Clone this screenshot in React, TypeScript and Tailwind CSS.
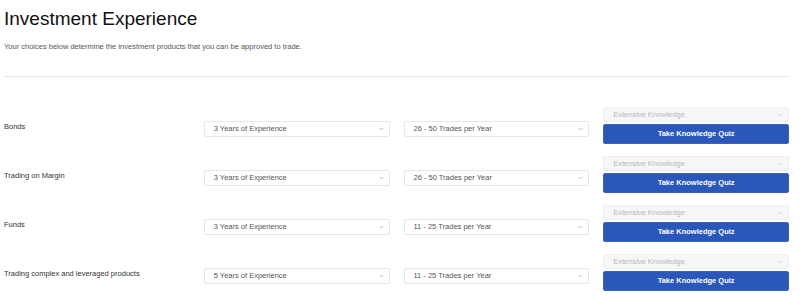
const rows = [
  { label: 'Bonds', years: '3 Years of Experience', trades: '26 - 50 Trades per Year' },
  { label: 'Trading on Margin', years: '3 Years of Experience', trades: '26 - 50 Trades per Year' },
  { label: 'Funds', years: '3 Years of Experience', trades: '11 - 25 Trades per Year' },
  { label: 'Trading complex and leveraged products', years: '5 Years of Experience', trades: '11 - 25 Trades per Year' },
]

function Chevron({ className }: { className?: string }) {
  return (
    <svg viewBox="0 0 6 4" className={className} width="5" height="4" fill="none">
      <path d="M1 1l2 2 2-2" stroke="currentColor" strokeWidth="0.8" strokeLinecap="round" strokeLinejoin="round" />
    </svg>
  )
}

function FakeSelect({ value, disabled }: { value: string; disabled?: boolean }) {
  return (
    <div
      className={
        disabled
          ? 'h-[15px] flex items-center justify-between pl-[9px] pr-[5px] rounded-[2px] border border-[#eef0f0] bg-[#f5f6f6] text-[#b8b8b8]'
          : 'h-[16px] flex items-center justify-between pl-[9px] pr-[5px] rounded-[2px] border border-[#e6e6e6] bg-white text-[#555]'
      }
    >
      <span className="text-[7.5px] leading-none">{value}</span>
      <Chevron className={disabled ? 'text-[#c4c4c4]' : 'text-[#9a9a9a]'} />
    </div>
  )
}

export default function App() {
  return (
    <div className="w-[800px] h-[305px] bg-white pl-[4px] pr-[11px] overflow-hidden" style={{ fontFamily: '"Liberation Sans", Arial, sans-serif' }}>
      <h1 className="pt-[9px] text-[19px] leading-[19px] text-[#111] font-normal">Investment Experience</h1>
      <p className="mt-[14px] text-[7.5px] leading-[10px] text-[#555]">
        Your choices below determine the investment products that you can be approved to trade.
      </p>
      <div className="mt-[24px] h-px bg-[#e4e4e4]" />

      <div className="mt-[30px] flex flex-col gap-[12px]">
        {rows.map((r) => (
          <div key={r.label} className="grid grid-cols-4 gap-x-[14px]">
            <div className="mt-[15px] text-[7.5px] leading-[10px] text-[#333]">{r.label}</div>
            <div className="mt-[14px]">
              <FakeSelect value={r.years} />
            </div>
            <div className="mt-[14px]">
              <FakeSelect value={r.trades} />
            </div>
            <div className="flex flex-col gap-[2px]">
              <FakeSelect value="Extensive Knowledge" disabled />
              <button className="h-[20px] rounded-[2px] bg-[#2a57b9] border border-[#3a63c0] text-white font-bold text-[7.5px]">
                Take Knowledge Quiz
              </button>
            </div>
          </div>
        ))}
      </div>
    </div>
  )
}
